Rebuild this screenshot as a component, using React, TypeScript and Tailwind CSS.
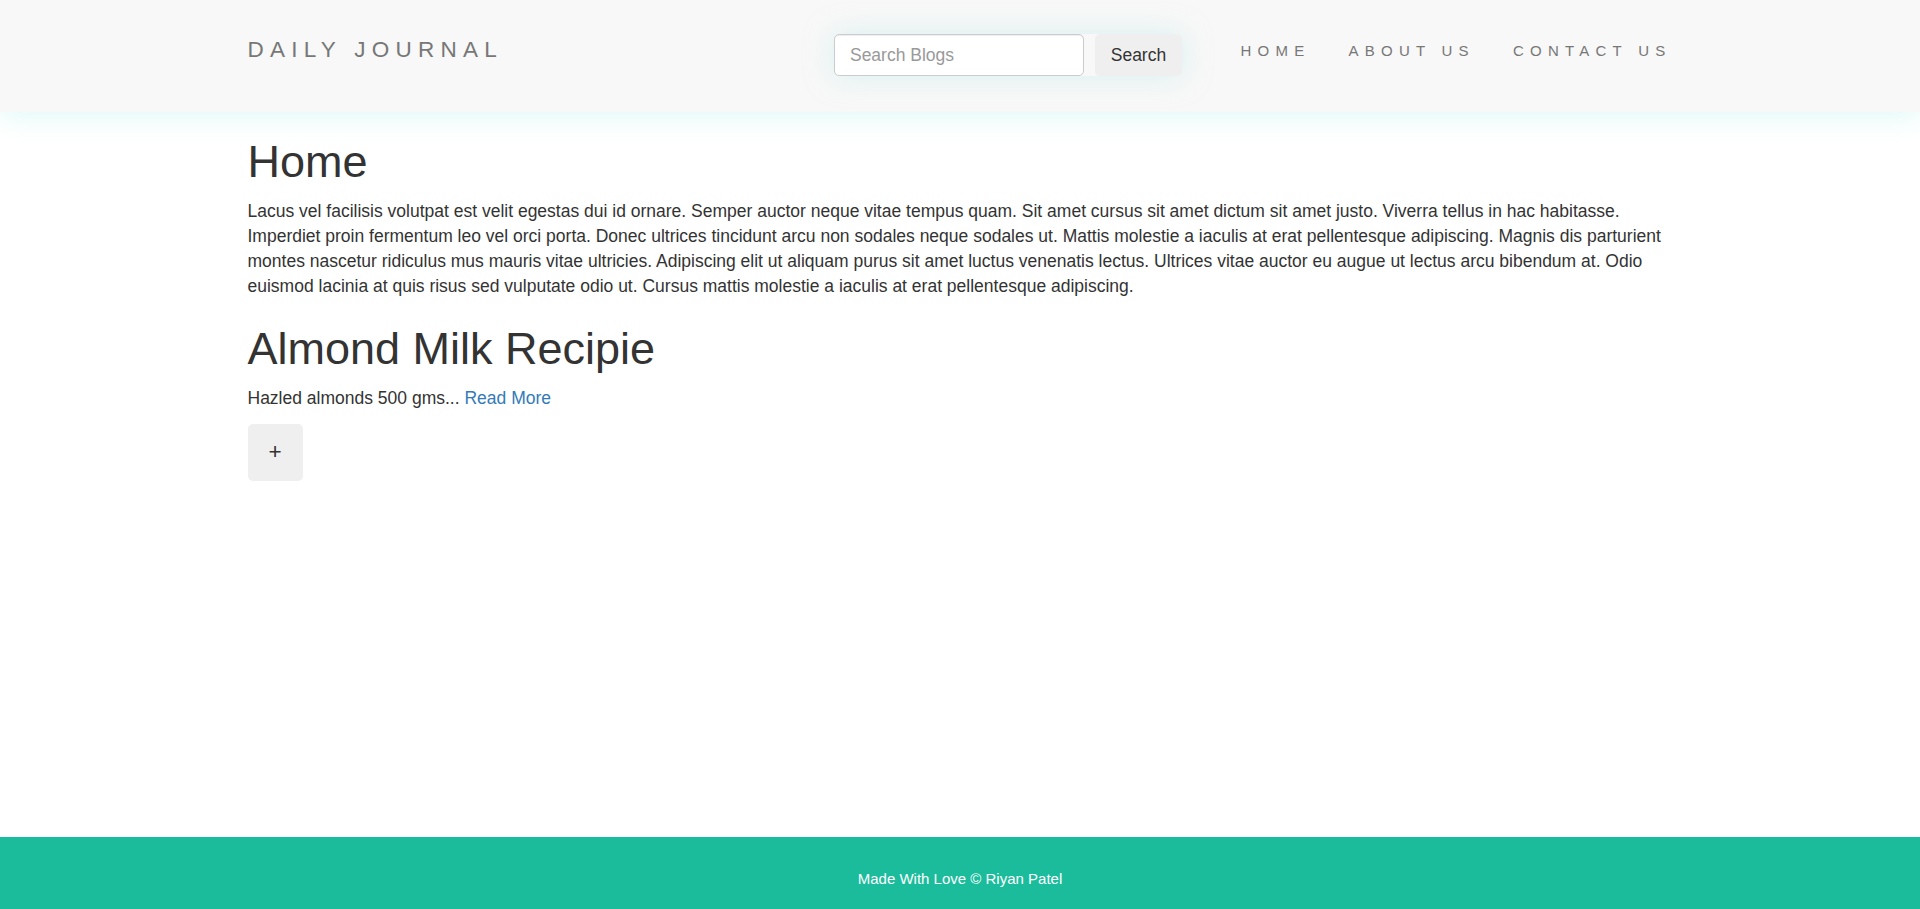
const sans = "font-['Liberation_Sans',Arial,sans-serif]";

function Header() {
  return (
    <header className="relative z-10 h-[112px] bg-[#f8f8f8] shadow-[0_6px_24px_rgba(190,245,240,0.45)]">
      <div className="mx-auto flex w-[1462.5px] items-start px-[18.75px]">
        <a
          href="#"
          className="mt-[38.5px] text-[22.5px] leading-[22.5px] tracking-[6.25px] text-[#777]"
        >
          DAILY JOURNAL
        </a>

        <div className="ml-auto mr-[1px] flex items-start">
          <form className="mt-[34px] flex gap-[11px] rounded-[6px] shadow-[0_0_28px_rgba(190,232,232,0.55)]">
            <input
              type="text"
              placeholder="Search Blogs"
              className="h-[42px] w-[250px] rounded-[5px] border-[1.25px] border-[#ccc] bg-white px-[15px] text-[17.5px] text-[#555] shadow-[inset_0_1px_1px_rgba(0,0,0,0.075)] outline-none placeholder:text-[#999]"
            />
            <button
              type="button"
              className="h-[42px] w-[87px] rounded-[5px] bg-[#efefef] text-[17.5px] text-[#333]"
            >
              Search
            </button>
          </form>

          <nav className="ml-[58.5px] mt-[42.5px] flex gap-[38px] text-[15px] leading-[15px] tracking-[6.25px] text-[#777]">
            <a href="#">HOME</a>
            <a href="#">ABOUT US</a>
            <a href="#">CONTACT US</a>
          </nav>
        </div>
      </div>
    </header>
  );
}

export default function App() {
  return (
    <div className={`${sans} flex min-h-screen flex-col bg-white text-[#333]`}>
      <Header />

      <main className="mx-auto w-[1462.5px] px-[18.75px]">
        <h1 className="mb-[12.5px] mt-[25px] text-[45px] leading-[1.1] font-normal">Home</h1>
        <p className="mb-[12.5px] text-[17.5px] leading-[25px]">
          Lacus vel facilisis volutpat est velit egestas dui id ornare. Semper auctor neque vitae
          tempus quam. Sit amet cursus sit amet dictum sit amet justo. Viverra tellus in hac
          habitasse. Imperdiet proin fermentum leo vel orci porta. Donec ultrices tincidunt arcu non
          sodales neque sodales ut. Mattis molestie a iaculis at erat pellentesque adipiscing. Magnis
          dis parturient montes nascetur ridiculus mus mauris vitae ultricies. Adipiscing elit ut
          aliquam purus sit amet luctus venenatis lectus. Ultrices vitae auctor eu augue ut lectus
          arcu bibendum at. Odio euismod lacinia at quis risus sed vulputate odio ut. Cursus mattis
          molestie a iaculis at erat pellentesque adipiscing.
        </p>

        <h1 className="mb-[12.5px] mt-[25px] text-[45px] leading-[1.1] font-normal">
          Almond Milk Recipie
        </h1>
        <p className="mb-[12.5px] text-[17.5px] leading-[25px]">
          Hazled almonds 500 gms...{" "}
          <a href="#" className="text-[#337ab7]">
            Read More
          </a>
        </p>

        <button
          type="button"
          className="h-[57px] w-[55px] rounded-[5px] bg-[#efefef] text-[22.5px] leading-[30px] text-[#333]"
        >
          +
        </button>
      </main>

      <footer className="mt-auto h-[72px] bg-[#1abc9c] pt-[31px] text-center text-[15px] leading-[21.5px] text-white">
        Made With Love © Riyan Patel
      </footer>
    </div>
  );
}
